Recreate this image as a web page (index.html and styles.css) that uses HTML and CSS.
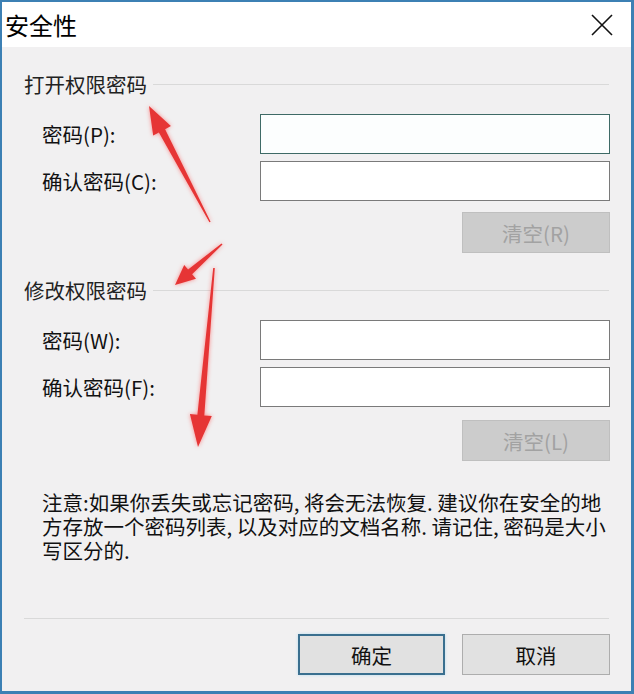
FILE: index.html
```html
<!DOCTYPE html>
<html lang="zh-CN">
<head>
<meta charset="utf-8">
<title>安全性</title>
<link rel="stylesheet" href="styles.css">
</head>
<body>
<div class="window">
  <div class="titlebar">
    <span class="title">安全性</span>
    <svg class="close" width="22" height="22" viewBox="0 0 22 22"><path d="M1 1 L21 21 M21 1 L1 21" stroke="#111" stroke-width="1.6" fill="none"/></svg>
  </div>
  <div class="content">
    <div class="group">
      <div class="group-head"><span class="group-title">打开权限密码</span><span class="rule"></span></div>
      <div class="fields">
        <label class="label">密码(P):</label><div class="input focused"></div>
        <label class="label">确认密码(C):</label><div class="input"></div>
      </div>
      <div class="btn-row"><button class="btn disabled">清空(R)</button></div>
    </div>
    <div class="group second">
      <div class="group-head"><span class="group-title">修改权限密码</span><span class="rule"></span></div>
      <div class="fields">
        <label class="label">密码(W):</label><div class="input"></div>
        <label class="label">确认密码(F):</label><div class="input"></div>
      </div>
      <div class="btn-row low"><button class="btn disabled">清空(L)</button></div>
    </div>
    <p class="note"><span>注意:如果你丢失或忘记密码, 将会无法恢复. 建议你在安全的地</span><span>方存放一个密码列表, 以及对应的文档名称. 请记住, 密码是大小</span><span>写区分的.</span></p>
    <div class="divider"></div>
    <div class="footer">
      <button class="btn primary">确定</button>
      <button class="btn">取消</button>
    </div>
  </div>
  <svg class="arrows" width="634" height="694" viewBox="0 0 634 694">
    <polygon points="149,106 170.9,126.1 165.1,129.2 210.6,221.7 209.4,222.3 158.9,132.4 153.2,135.5"/>
    <polygon points="175,285 196,278.7 192.1,274.2 222.5,244.5 221.5,243.5 188.1,269.6 184.2,265.1"/>
    <polygon points="198,447 211.8,416.1 204.3,415.4 214.8,268.1 213.2,267.9 197.4,414.8 189.9,414.1"/>
  </svg>
</div>
</body>
</html>
```

FILE: styles.css
```css
* { box-sizing: border-box; }
html, body { margin: 0; padding: 0; }
body {
  font-family: "Noto Sans CJK SC", "Noto Sans", sans-serif;
  color: #111;
  background: #3c80b4;
}
.window {
  position: relative;
  width: 634px;
  height: 694px;
  border-style: solid;
  border-color: #3c80b4;
  border-width: 2px 3px 3px 2px;
  background: #f1f0f1;
  display: flex;
  flex-direction: column;
}
.titlebar {
  height: 45px;
  background: #fff;
  display: flex;
  align-items: center;
  justify-content: space-between;
  padding: 0 18px 0 3px;
}
.title {
  font-size: 24px;
  line-height: 30px;
  color: #000;
}
.close { display: block; }
.content {
  flex: 1;
  padding: 0 21px 0 22px;
  display: flex;
  flex-direction: column;
}
.group { margin-top: 25px; }
.group.second { margin-top: 25px; }
.group-head {
  display: flex;
  align-items: center;
  gap: 6px;
  height: 24px;
}
.group-title {
  font-size: 20.5px;
  line-height: 24px;
  color: #222;
}
.rule {
  flex: 1;
  height: 1px;
  background: #d9d9d9;
  margin-right: 1px;
}
.fields {
  margin-top: 18px;
  display: grid;
  grid-template-columns: 236px 350px;
  row-gap: 7px;
  align-items: center;
}
.label {
  padding-left: 18px;
  font-size: 20.5px;
  line-height: 24px;
  color: #111;
}
.input {
  height: 40px;
  background: #fff;
  border: 1px solid #7a7a7a;
}
.input.focused {
  border-color: #3e6a66;
  background: #fcfefe;
}
.btn-row {
  display: flex;
  justify-content: flex-end;
  margin-top: 11px;
}
.btn-row.low { margin-top: 13px; }
.btn {
  width: 148px;
  height: 41px;
  font-family: inherit;
  font-size: 20.5px;
  color: #111;
  background: #e1e1e1;
  border: 1px solid #adadad;
  padding: 0;
}
.btn.disabled {
  background: #cccccc;
  border-color: #bfbfbf;
  color: #a2a2a2;
}
.btn.primary {
  width: 147px;
  border: 2px solid #3a6f8f;
  box-shadow: 0 0 3px #b9dcf0;
}
.note {
  margin: 29px 0 0;
  padding-left: 18px;
  font-size: 20.5px;
  line-height: 24px;
  color: #111;
  white-space: nowrap;
}
.note span { display: block; }
.divider {
  margin-top: 56px;
  height: 1px;
  background: #d9d9d9;
  margin-right: 1px;
}
.footer {
  margin-top: 15px;
  display: flex;
  justify-content: flex-end;
  gap: 17px;
}
.arrows {
  position: absolute;
  left: -2px;
  top: -2px;
  pointer-events: none;
  fill: #e63535;
  filter: drop-shadow(0 0 2px rgba(255, 90, 90, 0.7));
}
```
